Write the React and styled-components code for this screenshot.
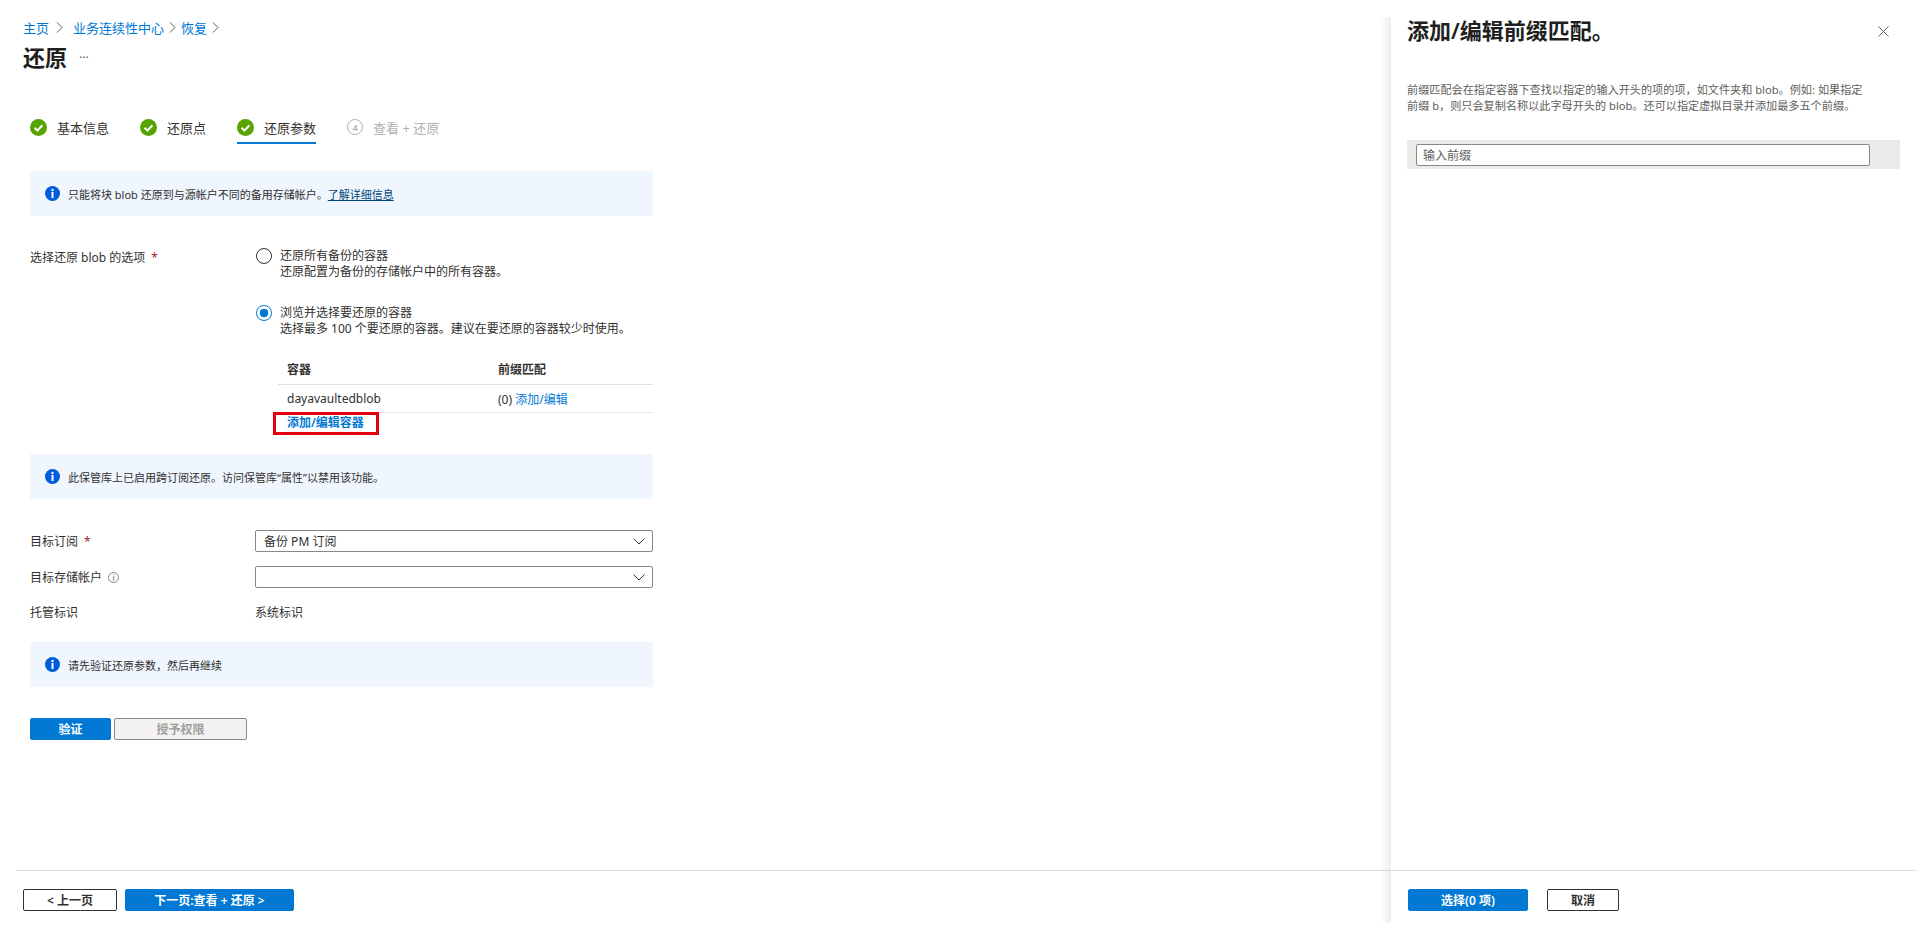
import React from "react"
import styled, { createGlobalStyle } from "styled-components"

const App = () => (
  <Page>
    <GlobalStyles />

    <MainBlade>
      <Header>
        <Breadcrumbs>
          <a href="#">主页</a>
          <FirstChevron><Chevron /></FirstChevron>
          <a href="#">业务连续性中心</a>
          <Chevron />
          <a href="#">恢复</a>
          <Chevron />
        </Breadcrumbs>
        <TitleRow>
          <h1>还原</h1>
          <span>...</span>
        </TitleRow>
      </Header>

      <Content>
        <Steps>
          <Step><CheckIcon />基本信息</Step>
          <Step><CheckIcon />还原点</Step>
          <Step active><CheckIcon />还原参数</Step>
          <Step disabled><NumberIcon>4</NumberIcon>查看 + 还原</Step>
        </Steps>

        <InfoBox top={27}>
          <InfoIcon />
          <span>只能将块 blob 还原到与源帐户不同的备用存储帐户。<u>了解详细信息</u></span>
        </InfoBox>

        <OptionsRow>
          <OptionsLabel>选择还原 blob 的选项<Required>*</Required></OptionsLabel>
          <OptionsList>
            <Option>
              <Radio />
              <div>
                还原所有备份的容器<br />
                还原配置为备份的存储帐户中的所有容器。
              </div>
            </Option>
            <Option>
              <Radio checked />
              <div>
                浏览并选择要还原的容器<br />
                选择最多 100 个要还原的容器。建议在要还原的容器较少时使用。
              </div>
            </Option>
            <Table>
              <TableHead>
                <span>容器</span>
                <span>前缀匹配</span>
              </TableHead>
              <TableRow>
                <span>dayavaultedblob</span>
                <span>(0) <a href="#">添加/编辑</a></span>
              </TableRow>
            </Table>
            <AddLink href="#">添加/编辑容器</AddLink>
          </OptionsList>
        </OptionsRow>

        <InfoBox top={19}>
          <InfoIcon />
          <span>此保管库上已启用跨订阅还原。访问保管库“属性”以禁用该功能。</span>
        </InfoBox>

        <FormRow top={31}>
          <FormLabel>目标订阅<Required>*</Required></FormLabel>
          <Dropdown>备份 PM 订阅<DownIcon /></Dropdown>
        </FormRow>
        <FormRow top={14}>
          <FormLabel>目标存储帐户<HelpIcon>i</HelpIcon></FormLabel>
          <Dropdown><DownIcon /></Dropdown>
        </FormRow>
        <FormRow top={14}>
          <FormLabel>托管标识</FormLabel>
          <span>系统标识</span>
        </FormRow>

        <InfoBox top={20}>
          <InfoIcon />
          <span>请先验证还原参数，然后再继续</span>
        </InfoBox>

        <ActionRow>
          <Button primary width={81}>验证</Button>
          <Button disabled width={133}>授予权限</Button>
        </ActionRow>
      </Content>

      <MainFooter>
        <Button width={94}>&lt; 上一页</Button>
        <Button primary width={169}>下一页:查看 + 还原 &gt;</Button>
      </MainFooter>
    </MainBlade>

    <SidePanel>
      <PanelHead>
        <h2>添加/编辑前缀匹配。</h2>
        <svg width="11" height="11" viewBox="0 0 11 11" fill="none" stroke="#605e5c">
          <path d="M.5.5l10 10M10.5.5l-10 10" />
        </svg>
      </PanelHead>
      <PanelText>
        前缀匹配会在指定容器下查找以指定的输入开头的项的项，如文件夹和 blob。例如: 如果指定<br />
        前缀 b，则只会复制名称以此字母开头的 blob。还可以指定虚拟目录并添加最多五个前缀。
      </PanelText>
      <PrefixStrip>
        <PrefixInput placeholder="输入前缀" />
      </PrefixStrip>
      <PanelFooter>
        <Button primary width={120}>选择(0 项)</Button>
        <Button width={72}>取消</Button>
      </PanelFooter>
    </SidePanel>
  </Page>
)

const Chevron = () => (
  <svg width="7" height="11" viewBox="0 0 7 11" fill="none" stroke="#605e5c">
    <path d="M1 .5l5 5-5 5" />
  </svg>
)

const CheckIcon = () => (
  <svg width="17" height="17" viewBox="0 0 17 17">
    <circle cx="8.5" cy="8.5" r="8.5" fill="#57a300" />
    <path d="M4.6 8.8l2.8 2.8 5-5.4" fill="none" stroke="#fff" strokeWidth="2" />
  </svg>
)

const InfoIcon = () => (
  <svg width="15" height="15" viewBox="0 0 15 15">
    <circle cx="7.5" cy="7.5" r="7.5" fill="#015cda" />
    <circle cx="7.5" cy="4" r="1.2" fill="#fff" />
    <rect x="6.5" y="6" width="2" height="6" fill="#fff" />
  </svg>
)

const DownIcon = () => (
  <DownSvg width="12" height="7" viewBox="0 0 12 7" fill="none" stroke="#323130">
    <path d="M.5.5L6 6 11.5.5" />
  </DownSvg>
)

const GlobalStyles = createGlobalStyle`
  html {
    box-sizing: border-box;
  }

  body {
    margin: 0;
    background: #fff;
    color: #323130;
    font-family: "Noto Sans", "Noto Sans CJK SC", sans-serif;
    font-size: 12px;
  }

  *, *::after, *::before {
    box-sizing: inherit;
  }

  a {
    color: #0078d4;
    text-decoration: none;
  }
`

const Page = styled.div`
  display: flex;
  height: 936px;
  overflow: hidden;
`

const MainBlade = styled.main`
  display: flex;
  flex-direction: column;
  width: 1391px;
  padding-left: 16px;
`

const Header = styled.header`
  padding: 18px 0 0 7px;
`

const Breadcrumbs = styled.nav`
  display: flex;
  align-items: center;
  gap: 5px;
  height: 18px;
  font-size: 13px;
`

const FirstChevron = styled.span`
  display: flex;
  margin: 0 5px 0 2px;
`

const TitleRow = styled.div`
  display: flex;
  align-items: center;
  gap: 12px;
  height: 30px;
  margin-top: 5px;

  h1 {
    margin: 0;
    font-size: 22px;
    font-weight: 600;
    color: #201f1e;
  }

  span {
    font-size: 12px;
    color: #605e5c;
    padding-bottom: 6px;
  }
`

const Content = styled.div`
  width: 637px;
  padding-left: 14px;
`

const Steps = styled.div`
  display: flex;
  gap: 31px;
  margin-top: 44px;
`

const Step = styled.div.withConfig({ shouldForwardProp: p => p !== "active" && p !== "disabled" })`
  display: flex;
  align-items: center;
  gap: 10px;
  height: 29px;
  padding-bottom: 3px;
  font-size: 13px;
  color: ${p => (p.disabled ? "#b3b0ad" : "#323130")};
  border-bottom: 2px solid ${p => (p.active ? "#0078d4" : "transparent")};
`

const NumberIcon = styled.span`
  display: flex;
  align-items: center;
  justify-content: center;
  width: 16px;
  height: 16px;
  border: 1px solid #b3b0ad;
  border-radius: 50%;
  font-size: 9px;
  font-weight: 600;
`

const InfoBox = styled.div.withConfig({ shouldForwardProp: p => p !== "top" })`
  display: flex;
  align-items: center;
  gap: 8px;
  height: 45px;
  margin-top: ${p => p.top}px;
  padding-left: 15px;
  background: #eff6fe;
  font-size: 11px;

  u {
    color: #004578;
  }
`

const OptionsRow = styled.div`
  display: flex;
  margin-top: 32px;
`

const OptionsLabel = styled.div`
  width: 226px;
  padding-top: 1px;
  line-height: 17px;
`

const Required = styled.span`
  margin-left: 6px;
  color: #a4262c;
`

const OptionsList = styled.div`
  flex: 1;
  min-width: 0;
`

const Option = styled.div`
  display: flex;
  gap: 8px;
  margin-bottom: 25px;
  line-height: 16px;
`

const Radio = styled.span.withConfig({ shouldForwardProp: p => p !== "checked" })`
  flex: none;
  width: 16px;
  height: 16px;
  border: 1px solid ${p => (p.checked ? "#0078d4" : "#323130")};
  border-radius: 50%;
  background: ${p => (p.checked ? "radial-gradient(circle, #0078d4 0 4px, #fff 4.6px)" : "#fff")};
`

const Table = styled.div`
  margin: -9px 0 0 22px;
`

const TableHead = styled.div`
  display: grid;
  grid-template-columns: 211px 1fr;
  align-items: center;
  height: 32px;
  padding-left: 9px;
  font-weight: 600;
  border-bottom: 1px solid #e1dfdd;
`

const TableRow = styled(TableHead)`
  height: 28px;
  font-weight: 400;
  border-bottom-color: #edebe9;
`

const AddLink = styled.a`
  display: block;
  width: 106px;
  height: 23px;
  margin: -1px 0 0 17px;
  padding-left: 11px;
  border: 3px solid #e3000f;
  font-weight: 600;
  line-height: 16px;
`

const FormRow = styled.div.withConfig({ shouldForwardProp: p => p !== "top" })`
  display: flex;
  align-items: center;
  min-height: 20px;
  margin-top: ${p => p.top}px;
`

const FormLabel = styled.div`
  display: flex;
  align-items: center;
  width: 225px;
`

const HelpIcon = styled.span`
  display: flex;
  align-items: center;
  justify-content: center;
  width: 11px;
  height: 11px;
  margin-left: 6px;
  border: 1px solid #8a8886;
  border-radius: 50%;
  color: #605e5c;
  font-size: 8px;
`

const Dropdown = styled.div`
  display: flex;
  align-items: center;
  justify-content: space-between;
  flex: 1;
  height: 22px;
  padding: 0 7px 0 8px;
  border: 1px solid #8a8886;
  border-radius: 2px;
`

const DownSvg = styled.svg`
  margin-left: auto;
`

const ActionRow = styled.div`
  display: flex;
  gap: 3px;
  margin-top: 31px;
`

const Button = styled.button.withConfig({ shouldForwardProp: p => p !== "primary" && p !== "width" })`
  width: ${p => p.width}px;
  height: 22px;
  padding: 0;
  border: 1px solid ${p => (p.primary ? "#0078d4" : p.disabled ? "#8a8886" : "#323130")};
  border-radius: 2px;
  background: ${p => (p.primary ? "#0078d4" : p.disabled ? "#f3f2f1" : "#fff")};
  color: ${p => (p.primary ? "#fff" : p.disabled ? "#a19f9d" : "#323130")};
  font-family: inherit;
  font-size: 12px;
  font-weight: 600;
`

const MainFooter = styled.footer`
  display: flex;
  gap: 8px;
  height: 66px;
  margin-top: auto;
  padding: 18px 0 0 7px;
  border-top: 1px solid #e1dfdd;
`

const SidePanel = styled.aside`
  position: relative;
  display: flex;
  flex-direction: column;
  flex: 1;
  height: 906px;
  margin-top: 17px;
  padding: 0 17px 0 16px;

  &::before {
    content: "";
    position: absolute;
    top: 0;
    bottom: 0;
    left: -10px;
    width: 10px;
    background: linear-gradient(to right, rgba(0, 0, 0, 0), rgba(0, 0, 0, 0.07));
  }
`

const PanelHead = styled.div`
  display: flex;
  align-items: center;
  justify-content: space-between;
  height: 28px;
  padding-right: 11px;

  h2 {
    margin: 0 0 4px;
    font-size: 22px;
    font-weight: 600;
    color: #201f1e;
  }
`

const PanelText = styled.p`
  margin: 37px 0 0;
  font-size: 11.15px;
  line-height: 16px;
  color: #605e5c;
`

const PrefixStrip = styled.div`
  height: 29px;
  margin-top: 26px;
  padding: 4px 30px 3px 9px;
  background: #edebe9;
`

const PrefixInput = styled.input`
  display: block;
  width: 100%;
  height: 22px;
  padding: 0 6px;
  border: 1px solid #8a8886;
  border-radius: 2px;
  background: #fff;
  font-family: inherit;
  font-size: 12px;

  &::placeholder {
    color: #605e5c;
  }
`

const PanelFooter = styled.footer`
  display: flex;
  gap: 19px;
  height: 53px;
  margin: auto -17px 0 -16px;
  padding: 18px 0 0 17px;
  border-top: 1px solid #e1dfdd;
`

export default App
